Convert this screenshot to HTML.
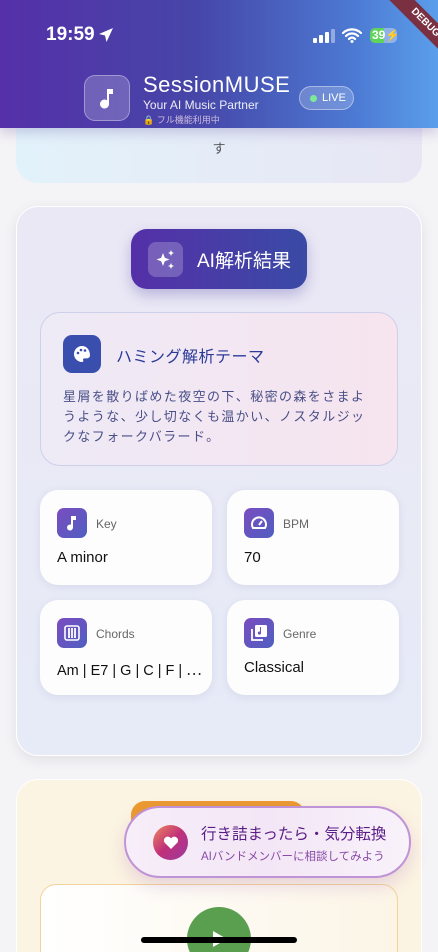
<!DOCTYPE html>
<html><head><meta charset="utf-8"><style>
*{margin:0;padding:0;box-sizing:border-box}
html,body{width:438px;height:952px;overflow:hidden}
body{background:#f4f3f6;font-family:"Liberation Sans","Noto Sans CJK JP",sans-serif;position:relative}
.abs{position:absolute}
.hdr{left:0;top:0;width:438px;height:128px;background:linear-gradient(90deg,#5530a8 0%,#4646a8 45%,#4c78d2 80%,#5a9eea 100%);z-index:5;box-shadow:0 4px 12px rgba(80,60,150,.25)}
.card{border-radius:22px}
.tile{background:#fdfdfd;border-radius:18px;box-shadow:0 2px 8px rgba(100,100,160,.12);width:172px;height:95px}
.ic{width:30px;height:30px;border-radius:7px;background:linear-gradient(135deg,#7a4cc0,#4f5fc0);display:flex;align-items:center;justify-content:center}
.lbl{font-size:12px;color:#666}
.val{font-size:15px;color:#111;white-space:nowrap}
</style></head><body>
<div class="abs hdr">
 <div class="abs" style="left:46px;top:24px;color:#fff;font-size:19px;font-weight:bold">19:59</div>
 <svg class="abs" style="left:98px;top:27px" width="16" height="16" viewBox="0 0 16 16"><path d="M15 1L1 7l6 1.5L8.5 15z" fill="#fff"/></svg>
 <svg class="abs" style="left:313px;top:29px" width="22" height="14"><rect x="0" y="9" width="4" height="5" rx="1" fill="#fff"/><rect x="6" y="6" width="4" height="8" rx="1" fill="#fff"/><rect x="12" y="3" width="4" height="11" rx="1" fill="#fff"/><rect x="18" y="0" width="4" height="14" rx="1" fill="#fff" opacity=".4"/></svg>
 <svg class="abs" style="left:342px;top:27px" width="20" height="16" viewBox="0 0 20 16"><path d="M1 6a13 13 0 0 1 18 0M4 9a8.5 8.5 0 0 1 12 0M7 12a4 4 0 0 1 6 0" stroke="#fff" stroke-width="2.2" fill="none" stroke-linecap="round"/><circle cx="10" cy="14.5" r="1.5" fill="#fff"/></svg>
 <div class="abs" style="left:370px;top:28px;width:27px;height:15px;border-radius:5px;background:rgba(255,255,255,.35);overflow:hidden"><div style="width:14px;height:15px;background:#5fd35a"></div><span class="abs" style="left:2px;top:0;font-size:12px;font-weight:bold;color:#fff;line-height:15px">39⚡</span></div>
 <div class="abs" style="left:84px;top:75px;width:46px;height:46px;border-radius:11px;background:rgba(255,255,255,.2);border:1px solid rgba(255,255,255,.35);display:flex;align-items:center;justify-content:center">
  <svg width="18" height="22" viewBox="0 0 18 22"><path d="M9 2h6v5H11v10a4.5 4.5 0 1 1-2-3.7z" fill="#fff"/></svg></div>
 <div class="abs" style="left:143px;top:72px;color:#fff;font-size:22px;letter-spacing:.5px">SessionMUSE</div>
 <div class="abs" style="left:143px;top:98px;color:#fff;font-size:12px;opacity:.9">Your AI Music Partner</div>
 <div class="abs" style="left:143px;top:113px;color:#cbd;font-size:9px">🔒 フル機能利用中</div>
 <div class="abs" style="left:299px;top:86px;width:55px;height:24px;border-radius:12px;background:rgba(255,255,255,.2);border:1px solid rgba(255,255,255,.4);color:#fff;font-size:11px;line-height:22px;padding-left:22px">LIVE<span class="abs" style="left:10px;top:8px;width:7px;height:7px;border-radius:50%;background:#7ee89a"></span></div>
 <div class="abs" style="left:370px;top:14px;width:110px;height:18px;background:#7a3040;transform:rotate(45deg);color:#fff;font-size:10px;font-weight:bold;text-align:center;line-height:18px">DEBUG</div>
</div>
<div class="abs card" style="left:16px;top:100px;width:406px;height:83px;background:linear-gradient(90deg,#e2f2fb,#e8e6f4);">
 <div class="abs" style="left:0;top:38px;width:406px;text-align:center;color:#555;font-size:13px">す</div></div>
<div class="abs card" style="left:16px;top:206px;width:406px;height:550px;background:linear-gradient(180deg,#ebe8f5,#e6ebf7);border:1.5px solid #fff;box-shadow:0 4px 14px rgba(0,0,0,.08)"></div>
<div class="abs" style="left:131px;top:229px;width:176px;height:60px;border-radius:16px;background:linear-gradient(90deg,#5530a8,#3a4aa5);box-shadow:0 6px 14px rgba(70,60,160,.3)">
 <div class="abs" style="left:17px;top:13px;width:35px;height:35px;border-radius:8px;background:rgba(255,255,255,.22);display:flex;align-items:center;justify-content:center">
  <svg width="22" height="22" viewBox="0 0 22 22" fill="#fff"><path d="M8 4l1.8 4.7L14.5 10.5 9.8 12.3 8 17 6.2 12.3 1.5 10.5 6.2 8.7z"/><path d="M16 1l.9 2.1L19 4l-2.1.9L16 7l-.9-2.1L13 4l2.1-.9z"/><path d="M16 14l.9 2.1 2.1.9-2.1.9L16 20l-.9-2.1L13 17l2.1-.9z"/></svg></div>
 <div class="abs" style="left:66px;top:17px;color:#fff;font-size:19px">AI解析結果</div></div>
<div class="abs" style="left:40px;top:312px;width:358px;height:154px;border-radius:20px;background:linear-gradient(90deg,#eeeaf6,#f6e4ee);border:1px solid #ccd0ea">
 <div class="abs" style="left:22px;top:22px;width:38px;height:38px;border-radius:9px;background:#3a4eae;display:flex;align-items:center;justify-content:center">
  <svg width="20" height="20" viewBox="0 0 20 20"><path d="M10 2a8 8 0 0 0 0 16c1.2 0 1.6-.8 1.2-1.6-.5-1 .2-2 1.3-2H15a3 3 0 0 0 3-3C18 5.5 14.4 2 10 2z" fill="#fff"/><circle cx="6" cy="9" r="1.3" fill="#3a4eae"/><circle cx="9" cy="6" r="1.3" fill="#3a4eae"/><circle cx="13" cy="6.5" r="1.3" fill="#3a4eae"/></svg></div>
 <div class="abs" style="left:75px;top:30px;color:#2b3a9a;font-size:16px;letter-spacing:.5px">ハミング解析テーマ</div>
 <div class="abs" style="left:22px;top:74px;color:#4a4f88;font-size:13px;line-height:20px;letter-spacing:1.4px;white-space:nowrap">星屑を散りばめた夜空の下、秘密の森をさまよ<br>うような、少し切なくも温かい、ノスタルジッ<br>クなフォークバラード。</div></div>
<div class="abs tile" style="left:40px;top:490px"><div class="abs ic" style="left:17px;top:18px"><svg width="12" height="16" viewBox="0 0 12 16"><path d="M5 1h5v4H7v7.5a3 3 0 1 1-2-2.8z" fill="#fff"/></svg></div><div class="abs lbl" style="left:56px;top:27px">Key</div><div class="abs val" style="left:17px;top:59px">A minor</div></div>
<div class="abs tile" style="left:227px;top:490px"><div class="abs ic" style="left:17px;top:18px"><svg width="18" height="18" viewBox="0 0 18 18"><path d="M3 14a7 7 0 1 1 12 0z" fill="none" stroke="#fff" stroke-width="2"/><path d="M9 11l3-4" stroke="#fff" stroke-width="2"/></svg></div><div class="abs lbl" style="left:56px;top:27px">BPM</div><div class="abs val" style="left:17px;top:59px">70</div></div>
<div class="abs tile" style="left:40px;top:600px"><div class="abs ic" style="left:17px;top:18px"><svg width="16" height="16" viewBox="0 0 16 16"><rect x="1" y="1" width="14" height="14" rx="2" fill="none" stroke="#fff" stroke-width="1.6"/><path d="M5 3v10M8 3v10M11 3v10" stroke="#fff" stroke-width="1.8"/></svg></div><div class="abs lbl" style="left:56px;top:27px">Chords</div><div class="abs val" style="left:17px;top:59px;font-size:14.5px">Am | E7 | G | C | F | ⋯</div></div>
<div class="abs tile" style="left:227px;top:600px"><div class="abs ic" style="left:17px;top:18px"><svg width="18" height="18" viewBox="0 0 18 18"><rect x="5" y="1" width="12" height="12" rx="1.5" fill="#fff"/><path d="M2 5v11h11" fill="none" stroke="#fff" stroke-width="1.8"/><path d="M11 3v6a1.6 1.6 0 1 1-1-1.4V3z" fill="#6a55c0"/></svg></div><div class="abs lbl" style="left:56px;top:27px">Genre</div><div class="abs val" style="left:17px;top:59px">Classical</div></div>
<div class="abs card" style="left:16px;top:779px;width:406px;height:200px;background:#fcf4e2;border:1.5px solid #fff"></div>
<div class="abs" style="left:131px;top:801px;width:174px;height:40px;border-radius:14px;background:#eb9a30"></div>
<div class="abs" style="left:40px;top:884px;width:358px;height:100px;border-radius:16px;background:linear-gradient(90deg,#fff,#fcf5e6);border:1px solid #f3d39a"></div>
<div class="abs" style="left:187px;top:907px;width:64px;height:64px;border-radius:50%;background:#5a9e50"></div>
<svg class="abs" style="left:212px;top:930px" width="16" height="18"><path d="M1 1l14 8-14 8z" fill="#fff"/></svg>
<div class="abs" style="left:124px;top:806px;width:287px;height:72px;border-radius:36px;background:linear-gradient(90deg,#f6eef9,#f3e6f6,#f8f2fa);border:2.5px solid #c093d6;box-shadow:0 8px 18px rgba(150,80,180,.2)">
 <div class="abs" style="left:27px;top:17px;width:35px;height:35px;border-radius:50%;background:linear-gradient(135deg,#ef8a5a,#c0307a,#9a3aa0);display:flex;align-items:center;justify-content:center"><svg width="16" height="14" viewBox="0 0 16 14"><path d="M8 13L1.5 6.5a3.6 3.6 0 0 1 6.5-4 3.6 3.6 0 0 1 6.5 4z" fill="#fff"/></svg></div>
 <div class="abs" style="left:75px;top:14px;color:#5a1d86;font-size:15.5px">行き詰まったら・気分転換</div>
 <div class="abs" style="left:75px;top:40px;color:#8a4aa8;font-size:11.5px">AIバンドメンバーに相談してみよう</div></div>
<div class="abs" style="left:141px;top:937px;width:156px;height:6px;border-radius:3px;background:#000"></div>
</body></html>
